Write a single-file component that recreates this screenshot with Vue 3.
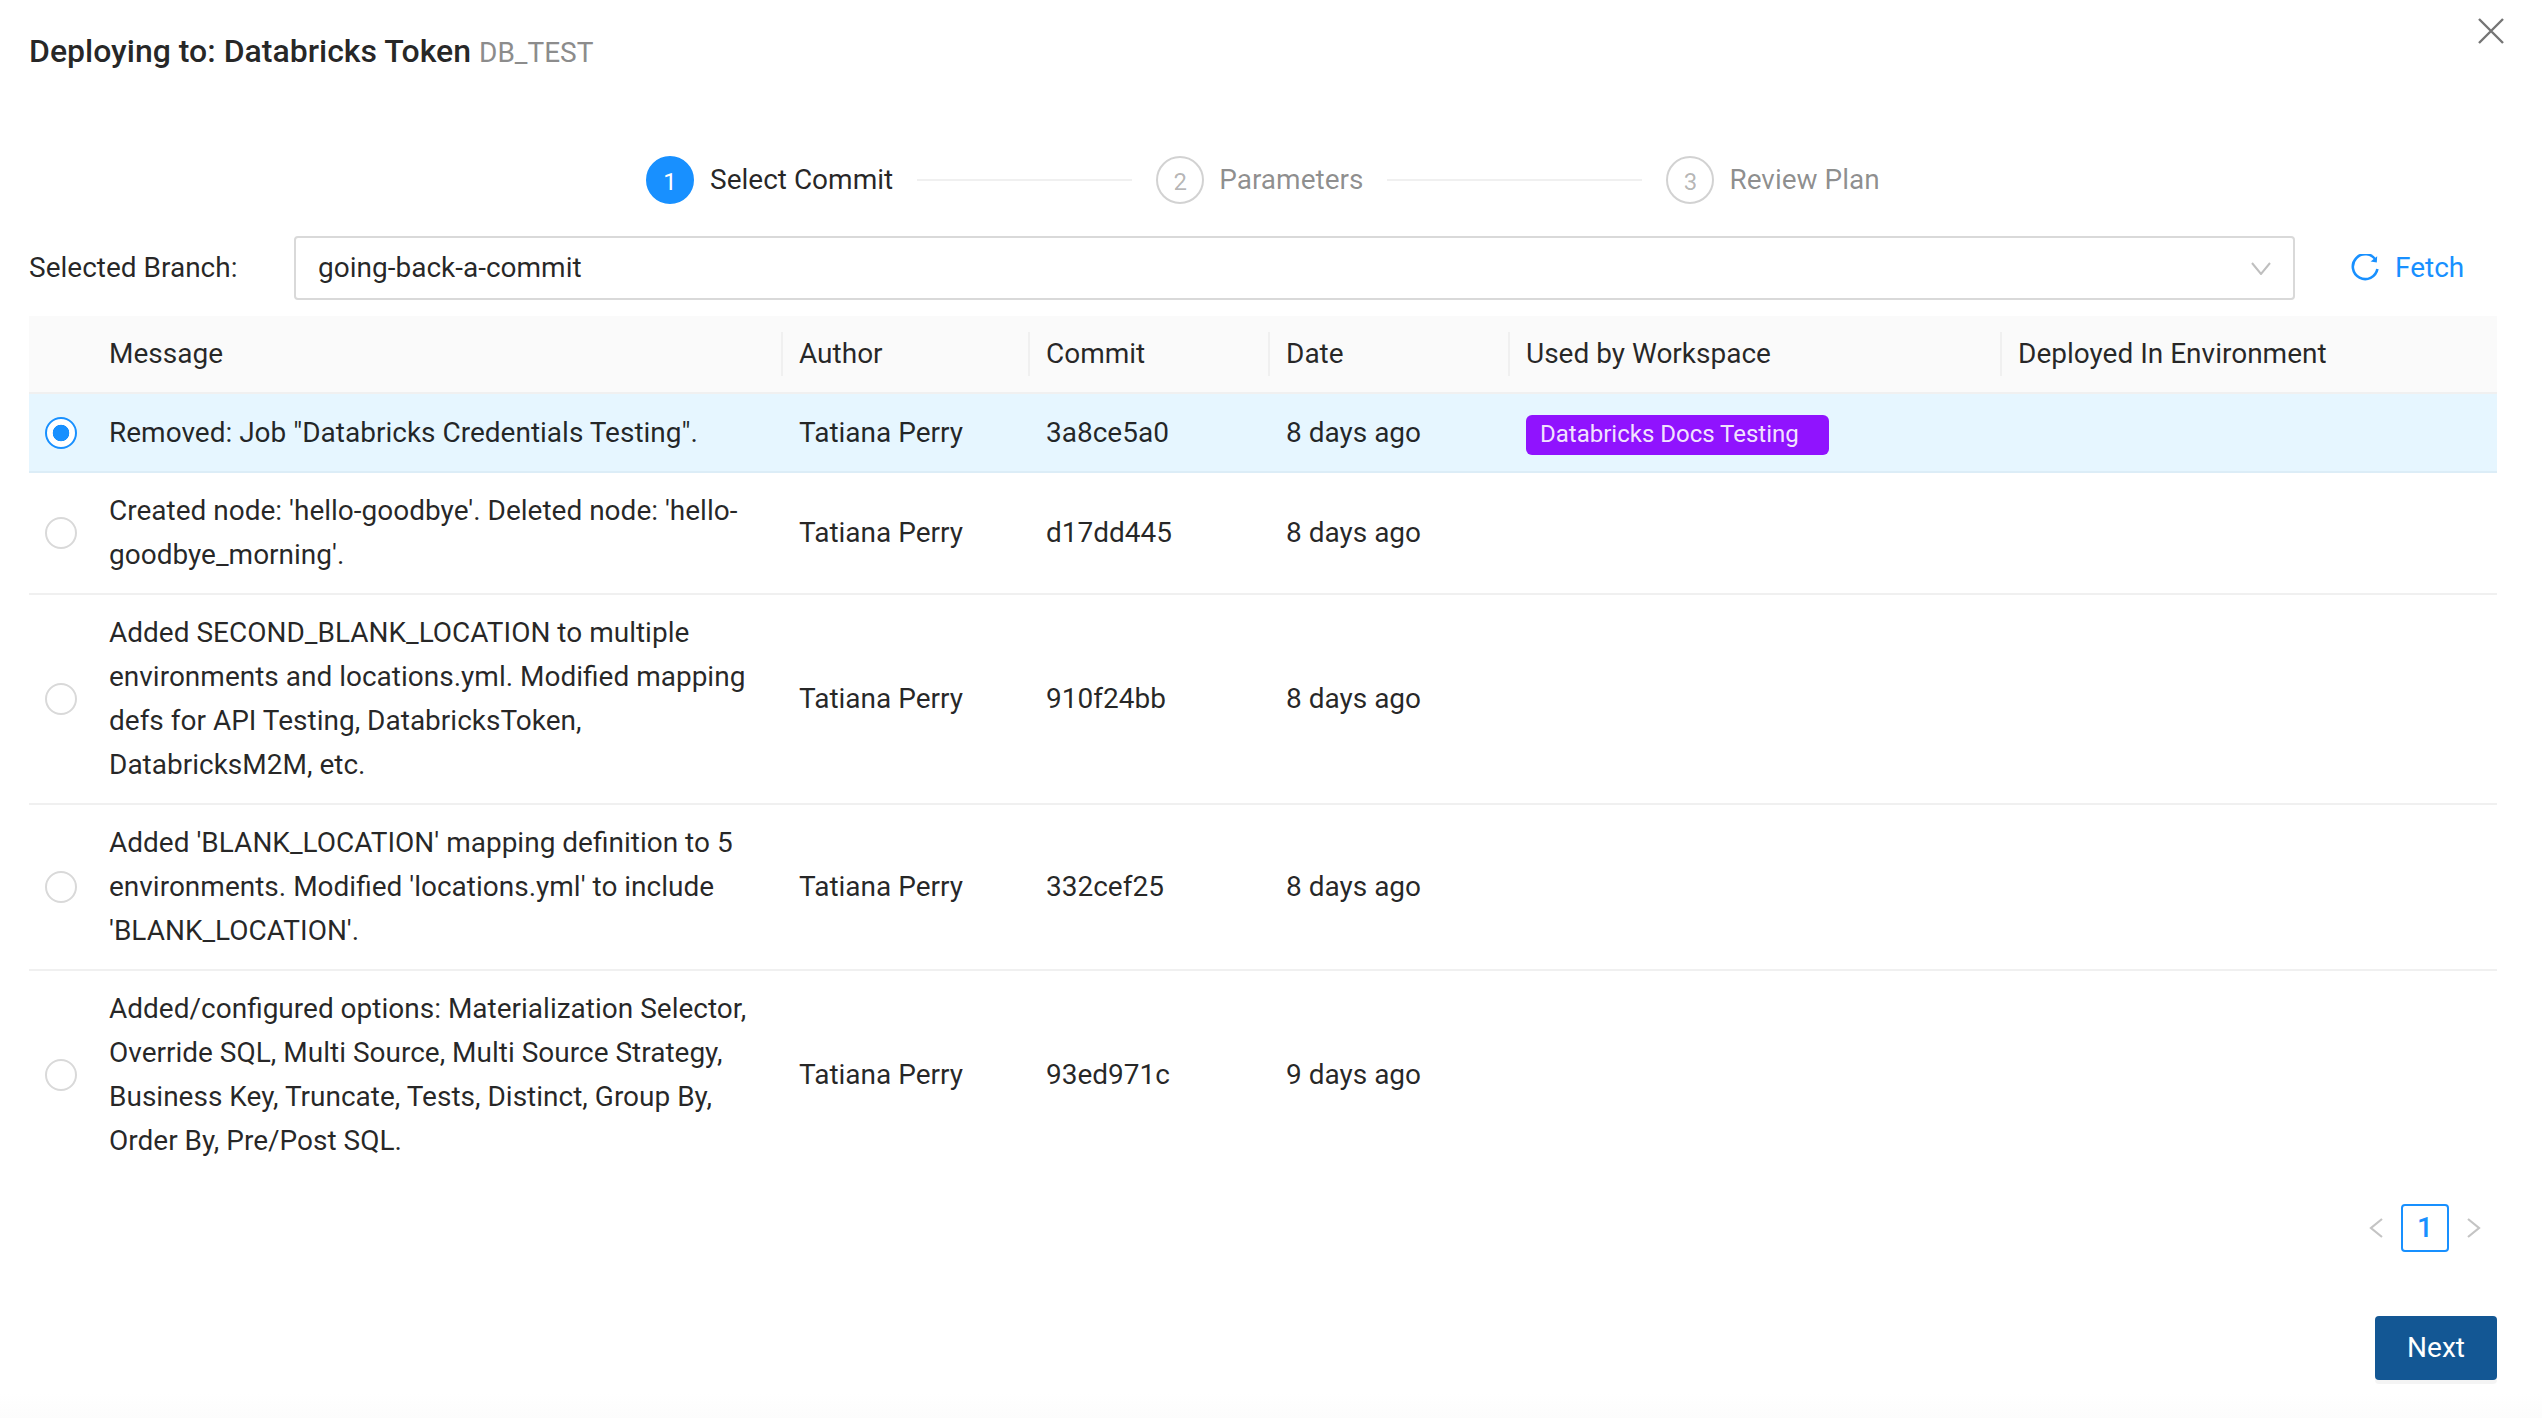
<template>
  <div class="modal">
    <button class="close" aria-label="Close">
      <svg viewBox="0 0 26 26" width="26" height="26">
        <path d="M1 1 25 25M25 1 1 25" />
      </svg>
    </button>

    <h2 class="title">Deploying to: Databricks Token <span class="code">DB_TEST</span></h2>

    <div class="steps">
      <template v-for="(step, i) in steps" :key="step.n">
        <div class="step" :class="{ active: i === 0 }">
          <span class="dot">{{ step.n }}</span>
          <span class="step-label">{{ step.label }}</span>
        </div>
        <span v-if="i < steps.length - 1" class="step-line" :class="'line-' + i"></span>
      </template>
    </div>

    <div class="branch">
      <span class="branch-label">Selected Branch:</span>
      <div class="select">
        <span>going-back-a-commit</span>
        <svg class="caret" viewBox="0 0 20 13" width="20" height="13">
          <path d="M1 1 10 12 19 1" />
        </svg>
      </div>
      <a class="fetch">
        <svg viewBox="0 0 28 28" width="28" height="28">
          <path d="M25 6.5A12.4 12.4 0 1 0 26.4 15" />
          <path class="tip" d="M26.2 2.2 25.8 8.6 19.6 7.6z" />
        </svg>
        Fetch
      </a>
    </div>

    <table class="commits">
      <colgroup>
        <col class="c-radio" />
        <col class="c-message" />
        <col class="c-author" />
        <col class="c-commit" />
        <col class="c-date" />
        <col class="c-used" />
        <col />
      </colgroup>
      <thead>
        <tr>
          <th></th>
          <th>Message</th>
          <th class="sep">Author</th>
          <th class="sep">Commit</th>
          <th class="sep">Date</th>
          <th class="sep">Used by Workspace</th>
          <th class="sep">Deployed In Environment</th>
        </tr>
      </thead>
      <tbody>
        <tr v-for="(row, i) in commits" :key="row.hash" :class="{ selected: i === 0 }">
          <td class="radio-cell"><span class="radio"></span></td>
          <td>{{ row.message }}</td>
          <td>{{ row.author }}</td>
          <td>{{ row.hash }}</td>
          <td>{{ row.date }}</td>
          <td><span v-if="row.workspace" class="tag">{{ row.workspace }}</span></td>
          <td></td>
        </tr>
      </tbody>
    </table>

    <div class="pager">
      <svg viewBox="0 0 14 20" width="14" height="20"><path d="M13 1 2 10 13 19" /></svg>
      <span class="page">1</span>
      <svg viewBox="0 0 14 20" width="14" height="20"><path d="M1 1 12 10 1 19" /></svg>
    </div>

    <div class="footer">
      <button class="next">Next</button>
    </div>
  </div>
</template>

<script setup>
const steps = [
  { n: 1, label: 'Select Commit' },
  { n: 2, label: 'Parameters' },
  { n: 3, label: 'Review Plan' },
]

const commits = [
  {
    message: 'Removed: Job "Databricks Credentials Testing".',
    author: 'Tatiana Perry',
    hash: '3a8ce5a0',
    date: '8 days ago',
    workspace: 'Databricks Docs Testing',
  },
  {
    message: "Created node: 'hello-goodbye'. Deleted node: 'hello-goodbye_morning'.",
    author: 'Tatiana Perry',
    hash: 'd17dd445',
    date: '8 days ago',
  },
  {
    message:
      'Added SECOND_BLANK_LOCATION to multiple environments and locations.yml. Modified mapping defs for API Testing, DatabricksToken, DatabricksM2M, etc.',
    author: 'Tatiana Perry',
    hash: '910f24bb',
    date: '8 days ago',
  },
  {
    message:
      "Added 'BLANK_LOCATION' mapping definition to 5 environments. Modified 'locations.yml' to include 'BLANK_LOCATION'.",
    author: 'Tatiana Perry',
    hash: '332cef25',
    date: '8 days ago',
  },
  {
    message:
      'Added/configured options: Materialization Selector, Override SQL, Multi Source, Multi Source Strategy, Business Key, Truncate, Tests, Distinct, Group By, Order By, Pre/Post SQL.',
    author: 'Tatiana Perry',
    hash: '93ed971c',
    date: '9 days ago',
  },
]
</script>

<style>
html,
body {
  background: #fff;
}
</style>

<style scoped>
.modal {
  position: relative;
  box-sizing: border-box;
  width: 2542px;
  height: 1418px;
  padding: 29px 45px 0 29px;
  background: linear-gradient(#fff 1394px, #fcfcfc);
  font-family: Roboto, "Liberation Sans", sans-serif;
  font-size: 28px;
  line-height: 44px;
  color: rgba(0, 0, 0, 0.85);
}

.close {
  position: absolute;
  top: 18px;
  right: 38px;
  padding: 0;
  border: 0;
  background: none;
  line-height: 0;
}
.close path {
  fill: none;
  stroke: #757575;
  stroke-width: 2.4;
}

.title {
  margin: 0;
  font-size: 32px;
  font-weight: 500;
  line-height: 44px;
}
.code {
  font-size: 28px;
  font-weight: 400;
  color: #8c8c8c;
}

.steps {
  display: flex;
  align-items: center;
  height: 48px;
  margin-top: 81px;
  padding-left: 617px;
}
.step {
  display: flex;
  align-items: center;
  gap: 15px;
  color: rgba(0, 0, 0, 0.45);
}
.step.active {
  gap: 16px;
  color: rgba(0, 0, 0, 0.85);
}
.dot {
  box-sizing: border-box;
  width: 48px;
  height: 48px;
  border: 2px solid #d2d2d2;
  border-radius: 50%;
  font-size: 24px;
  line-height: 48px;
  text-align: center;
  color: rgba(0, 0, 0, 0.3);
}
.active .dot {
  border-color: #1890ff;
  background: #1890ff;
  color: #fff;
}
.step-line {
  height: 2px;
  margin: 0 24px;
  background: #f0f0f0;
}
.line-0 {
  width: 215px;
}
.line-1 {
  width: 255px;
}

.branch {
  display: flex;
  align-items: center;
  margin-top: 32px;
}
.branch-label {
  width: 265px;
  flex: none;
}
.select {
  display: flex;
  align-items: center;
  justify-content: space-between;
  box-sizing: border-box;
  width: 2001px;
  height: 64px;
  padding: 0 22px 0 22px;
  border: 2px solid #d9d9d9;
  border-radius: 4px;
}
.caret path {
  fill: none;
  stroke: #bfbfbf;
  stroke-width: 2;
}
.fetch {
  display: flex;
  align-items: center;
  gap: 16px;
  margin-left: 56px;
  color: #1890ff;
}
.fetch path {
  fill: none;
  stroke: #1890ff;
  stroke-width: 2.6;
}
.fetch .tip {
  fill: #1890ff;
  stroke: none;
}

.commits {
  width: 2468px;
  margin-top: 16px;
  border-collapse: separate;
  border-spacing: 0;
  table-layout: fixed;
}
.c-radio {
  width: 63px;
}
.c-message {
  width: 690px;
}
.c-author {
  width: 247px;
}
.c-commit {
  width: 240px;
}
.c-date {
  width: 240px;
}
.c-used {
  width: 492px;
}
th,
td {
  padding: 16px 17px;
  border-bottom: 2px solid #f0f0f0;
  text-align: left;
  font-weight: 400;
}
tbody tr:last-child td {
  border-bottom: 0;
}
th {
  position: relative;
  background: #fafafa;
}
.sep::before {
  content: "";
  position: absolute;
  top: 16px;
  bottom: 16px;
  left: -1px;
  width: 2px;
  background: #f0f0f0;
}
.selected td {
  padding-top: 17px;
  background: #e6f6ff;
  border-bottom-color: #dcedf7;
}
.selected .radio-cell,
.radio-cell {
  padding: 0 0 0 16px;
  line-height: 0;
}
.radio {
  display: inline-block;
  box-sizing: border-box;
  width: 32px;
  height: 32px;
  border: 2px solid #d9d9d9;
  border-radius: 50%;
  background: #fff;
}
.selected .radio {
  border-color: #1890ff;
  background: radial-gradient(circle, #1890ff 8px, #fff 8.6px);
}
.tag {
  display: inline-block;
  box-sizing: border-box;
  width: 303px;
  height: 40px;
  padding-left: 14px;
  border-radius: 6px;
  background: #9013fe;
  color: rgba(255, 255, 255, 0.9);
  font-size: 24px;
  line-height: 38px;
  vertical-align: middle;
}

.pager {
  display: flex;
  align-items: center;
  justify-content: flex-end;
  gap: 18px;
  height: 48px;
  margin-top: 25px;
  padding-right: 16px;
}
.pager path {
  fill: none;
  stroke: #c4c4c4;
  stroke-width: 2.2;
}
.page {
  box-sizing: border-box;
  width: 48px;
  height: 48px;
  border: 2px solid #1890ff;
  border-radius: 4px;
  font-weight: 500;
  line-height: 44px;
  text-align: center;
  color: #1890ff;
}

.footer {
  display: flex;
  justify-content: flex-end;
  margin-top: 64px;
}
.next {
  width: 122px;
  height: 64px;
  border: 0;
  border-radius: 4px;
  background: #135794;
  box-shadow: 0 4px 0 rgba(0, 0, 0, 0.045);
  font: 400 28px/44px Roboto, "Liberation Sans", sans-serif;
  color: #fff;
}
</style>
